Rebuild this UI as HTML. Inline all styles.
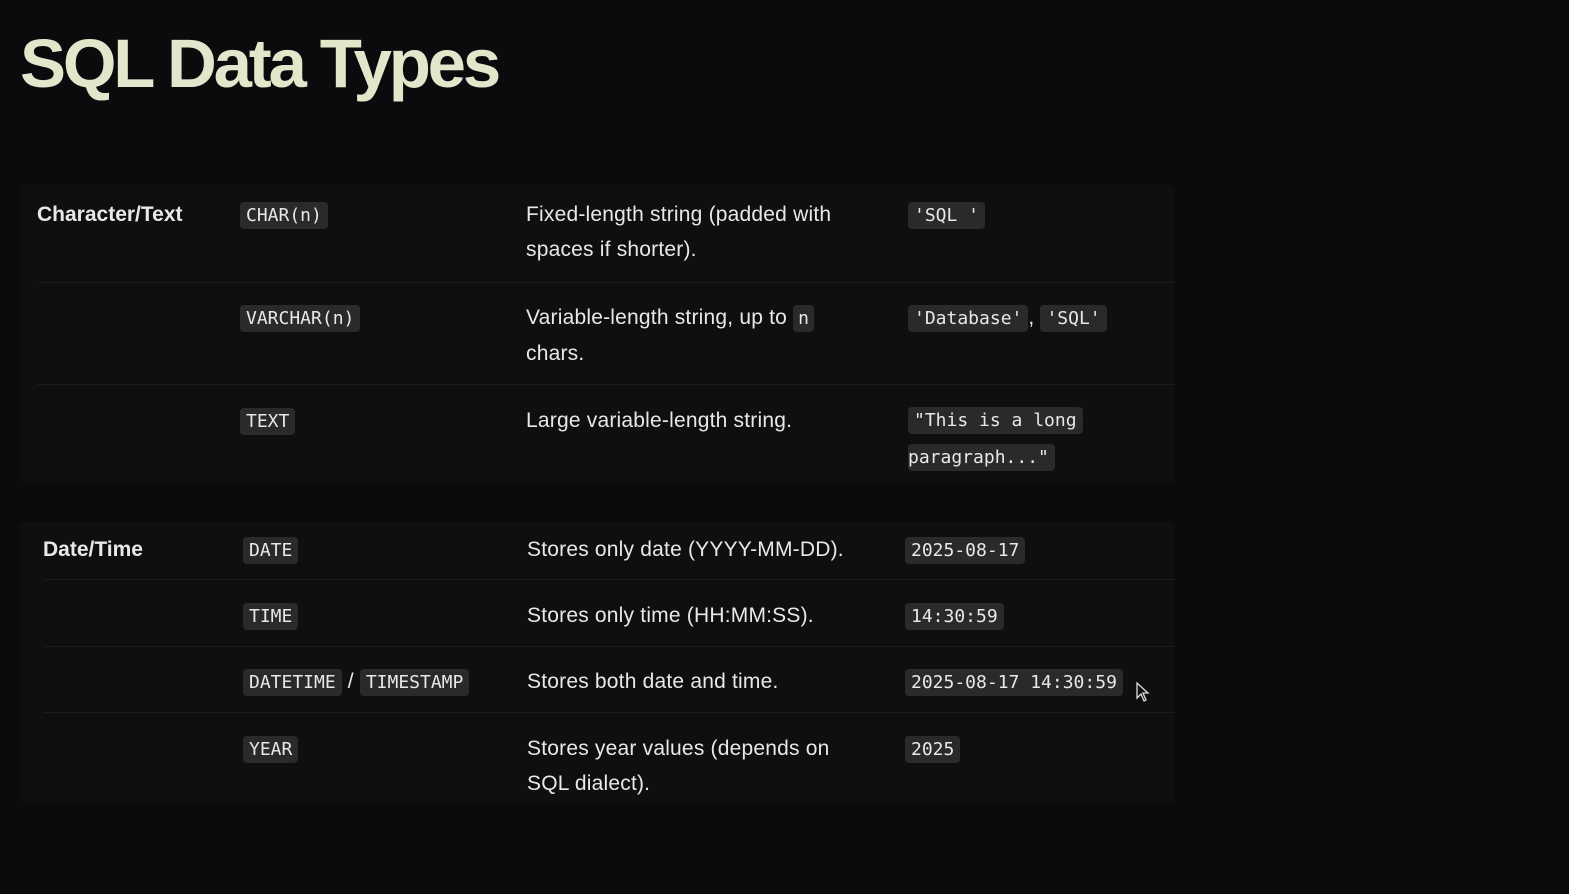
<!DOCTYPE html>
<html><head><meta charset="utf-8"><style>
body{margin:0;width:1569px;height:894px;background:#0b0b0d;overflow:hidden;font-family:"Liberation Sans",sans-serif;color:#e8e8e8;position:relative}
h1{position:absolute;left:20px;top:24px;margin:0;font-size:69px;font-weight:bold;color:#e4e6cc;letter-spacing:-3.2px}
.panel{position:absolute;left:20px;width:1155px;background:#0f0f11;border-radius:6px}
.t{position:absolute;font-size:21px;line-height:35px;white-space:nowrap;letter-spacing:0.2px}
.b{font-weight:bold;letter-spacing:0}
code{font-family:"DejaVu Sans Mono","Liberation Mono",monospace;font-size:18px;letter-spacing:0;background:#2a2a2c;border-radius:4px;padding:3px 6px;color:#e8e8e8}
.hr{position:absolute;height:1px;background:#1c1c1f}
</style></head><body>
<h1>SQL Data Types</h1>
<div class="panel" style="top:185px;height:298px"></div>
<div class="panel" style="top:522px;height:281px"></div>
<div class="hr" style="left:37px;top:282px;width:1138px"></div>
<div class="hr" style="left:37px;top:384px;width:1138px"></div>
<div class="hr" style="left:43px;top:579px;width:1132px"></div>
<div class="hr" style="left:43px;top:646px;width:1132px"></div>
<div class="hr" style="left:43px;top:712px;width:1132px"></div>

<div class="t b" style="left:37px;top:197px">Character/Text</div>
<div class="t" style="left:240px;top:197px"><code>CHAR(n)</code></div>
<div class="t" style="left:526px;top:197px">Fixed-length string (padded with<br>spaces if shorter).</div>
<div class="t" style="left:908px;top:197px"><code>'SQL '</code></div>

<div class="t" style="left:240px;top:300px"><code>VARCHAR(n)</code></div>
<div class="t" style="left:526px;top:300px">Variable-length string, up to <code style="padding:3px 5px">n</code><br>chars.</div>
<div class="t" style="left:908px;top:300px"><code>'Database'</code>, <code>'SQL'</code></div>

<div class="t" style="left:240px;top:403px"><code>TEXT</code></div>
<div class="t" style="left:526px;top:403px">Large variable-length string.</div>
<div class="t" style="left:908px;top:402px;line-height:36px"><code>"This is a long</code><br><code style="padding-left:0">paragraph..."</code></div>

<div class="t b" style="left:43px;top:532px">Date/Time</div>
<div class="t" style="left:243px;top:532px"><code>DATE</code></div>
<div class="t" style="left:527px;top:532px">Stores only date (YYYY-MM-DD).</div>
<div class="t" style="left:905px;top:532px"><code>2025-08-17</code></div>

<div class="t" style="left:243px;top:598px"><code>TIME</code></div>
<div class="t" style="left:527px;top:598px">Stores only time (HH:MM:SS).</div>
<div class="t" style="left:905px;top:598px"><code>14:30:59</code></div>

<div class="t" style="left:243px;top:664px"><code>DATETIME</code> / <code>TIMESTAMP</code></div>
<div class="t" style="left:527px;top:664px">Stores both date and time.</div>
<div class="t" style="left:905px;top:664px"><code>2025-08-17 14:30:59</code></div>

<div class="t" style="left:243px;top:731px"><code>YEAR</code></div>
<div class="t" style="left:527px;top:731px">Stores year values (depends on<br>SQL dialect).</div>
<div class="t" style="left:905px;top:731px"><code>2025</code></div>

<svg style="position:absolute;left:1136px;top:682px" width="16" height="22" viewBox="0 0 16 22"><path d="M1 1 L1 16 L5 12 L8 19 L10 18 L7 11 L12 11 Z" fill="#111" stroke="#ddd" stroke-width="1.3"/></svg>
</body></html>
